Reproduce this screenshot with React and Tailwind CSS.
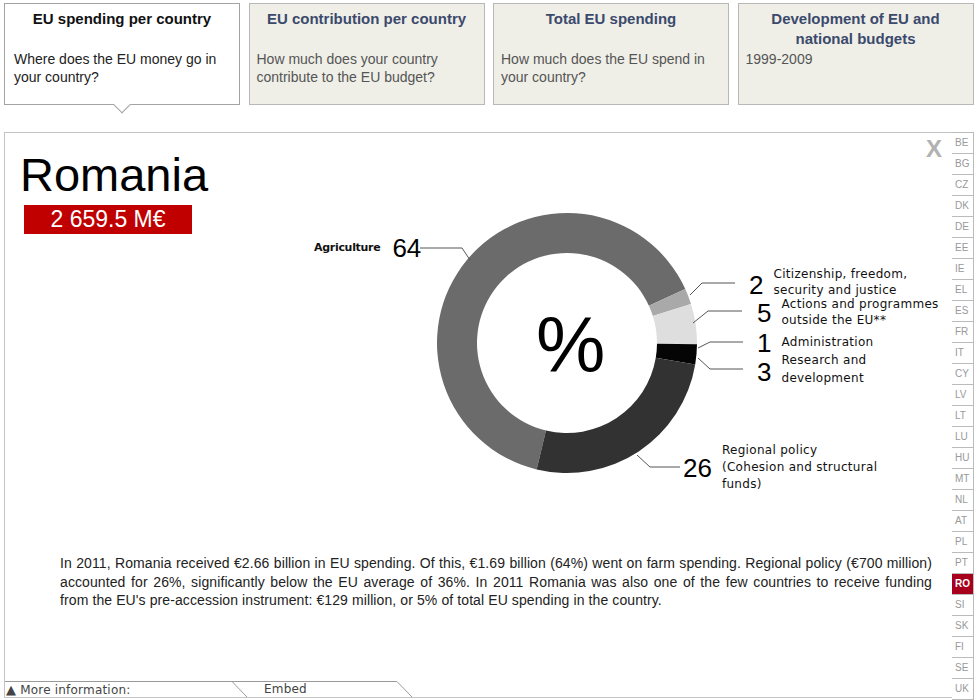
import React from 'react';

const tabs = [
  { title: ['EU spending per country'], desc: 'Where does the EU money go in your country?', active: true },
  { title: ['EU contribution per country'], desc: 'How much does your country contribute to the EU budget?' },
  { title: ['Total EU spending'], desc: 'How much does the EU spend in your country?' },
  { title: ['Development of EU and', 'national budgets'], desc: '1999-2009' },
];

const countries = ['BE', 'BG', 'CZ', 'DK', 'DE', 'EE', 'IE', 'EL', 'ES', 'FR', 'IT', 'CY', 'LV', 'LT', 'LU', 'HU', 'MT', 'NL', 'AT', 'PL', 'PT', 'RO', 'SI', 'SK', 'FI', 'SE', 'UK'];

// donut geometry, in page coordinates
const cx = 567;
const cy = 343;
const R = 130;
const r = 90;

const segments = [
  { from: 193.5, to: 425.5, color: '#6b6b6b' },
  { from: 65.5, to: 72.5, color: '#a9a9a9' },
  { from: 72.5, to: 90.5, color: '#dedede' },
  { from: 90.5, to: 99.5, color: '#050505' },
  { from: 99.5, to: 193.5, color: '#323232' },
];

const pt = (rad, a) => {
  const t = (a * Math.PI) / 180;
  return [cx + rad * Math.sin(t), cy - rad * Math.cos(t)];
};

const arc = (a0, a1) => {
  const large = a1 - a0 > 180 ? 1 : 0;
  const [x0, y0] = pt(R, a0);
  const [x1, y1] = pt(R, a1);
  const [x2, y2] = pt(r, a1);
  const [x3, y3] = pt(r, a0);
  return `M${x0} ${y0} A${R} ${R} 0 ${large} 1 ${x1} ${y1} L${x2} ${y2} A${r} ${r} 0 ${large} 0 ${x3} ${y3} Z`;
};

const leaders = [
  '420,248 462,248 470,260',
  '690,295 702,283 735,283',
  '693,323 708,311 742,311',
  '698,348 710,342 743,342',
  '698,358 710,369 743,369',
  '637,455 650,467 680,467',
];

// chart labels: number + text, placed on the chart canvas (page coords - panel origin 5,133)
const labels = [
  { x: 749, y: 268, numMt: 3.5, textMt: 0, gap: 4, num: '2', lines: ['Citizenship, freedom,', 'security and justice'] },
  { x: 757, y: 298, numMt: 1.5, textMt: 0, gap: 4, num: '5', lines: ['Actions and programmes', 'outside the EU**'] },
  { x: 757, y: 329.5, numMt: 0, textMt: 6.5, gap: 0, num: '1', lines: ['Administration'] },
  { x: 757, y: 354, numMt: 4.5, textMt: 0, gap: 6, num: '3', lines: ['Research and', 'development'] },
  { x: 683, y: 444, numMt: 10.5, textMt: 0, gap: 5, num: '26', lines: ['Regional policy', '(Cohesion and structural', 'funds)'] },
];

const ChartLabel = ({ l }) => (
  <div className="absolute flex items-start gap-[10px]" style={{ left: l.x - 5, top: l.y - 133 }}>
    <div className="text-[26px] leading-none text-black" style={{ marginTop: l.numMt }}>
      {l.num}
    </div>
    <div
      className="flex flex-col text-[12px] leading-[12px] tracking-[0.3px] text-[#111] whitespace-nowrap font-['DejaVu_Sans',Verdana,sans-serif]"
      style={{ marginTop: l.textMt, gap: l.gap }}
    >
      {l.lines.map((t) => (
        <div key={t}>{t}</div>
      ))}
    </div>
  </div>
);

const Tab = ({ tab }) => (
  <div
    className={`relative w-[236px] h-[102px] border pt-[5px] ${
      tab.active ? 'bg-white border-[#a3a3a3] px-[9px]' : 'bg-[#efefe8] border-[#b8b8b8] px-[7px]'
    }`}
  >
    <div
      className={`min-h-[41px] text-center text-[15px] font-bold leading-[20px] ${
        tab.active ? 'text-[#111]' : 'text-[#3b4a6c]'
      }`}
    >
      {tab.title.map((t) => (
        <div key={t}>{t}</div>
      ))}
    </div>
    <div className={`text-[14px] leading-[18px] ${tab.active ? 'text-[#222]' : 'text-[#555]'}`}>{tab.desc}</div>
    {tab.active && (
      <div className="absolute left-1/2 -bottom-[7px] -ml-[6px] w-[12px] h-[12px] rotate-45 bg-white border-r border-b border-[#a3a3a3]" />
    )}
  </div>
);

export default function App() {
  return (
    <div className="w-[974px] h-[700px] overflow-hidden bg-white font-['Liberation_Sans',Arial,sans-serif]">
      <div className="flex gap-[8.5px] pt-[3px] pl-[4px]">
        {tabs.map((t, i) => (
          <Tab key={i} tab={t} />
        ))}
      </div>

      <div className="flex mt-[27px] ml-[4px]">
        <div className="relative flex flex-col w-[948px] h-[566px] border-l border-t border-b border-[#c4c4c4]">
          <div className="relative h-[421px]">
            <div className="pl-[15px] pt-[18px]">
              <div className="text-[47px] leading-none text-black">Romania</div>
              <div className="mt-[7px] ml-[4px] w-[168px] h-[29px] bg-[#c00000] text-white text-[23px] leading-[29px] text-center">
                2 659.5 M€
              </div>
            </div>

            <div className="absolute right-[10px] top-[4px] text-[24px] font-bold leading-none text-[#b2b2b2]">X</div>

            <svg className="absolute left-0 top-0" width="947" height="421" viewBox="5 133 947 421">
              {segments.map((s, i) => (
                <path key={i} d={arc(s.from, s.to)} fill={s.color} />
              ))}
              {leaders.map((p, i) => (
                <polyline key={i} points={p} fill="none" stroke="#555" strokeWidth="1" />
              ))}
            </svg>

            <div className="absolute left-[531px] top-[173px] text-[78px] leading-none text-black">%</div>

            <div className="absolute left-[309px] top-[101.5px] flex items-start gap-[12px]">
              <div className="mt-[7.5px] text-[11px] font-bold tracking-[-0.3px] leading-[12px] text-[#111] font-['DejaVu_Sans',Verdana,sans-serif]">
                Agriculture
              </div>
              <div className="text-[26px] leading-none text-black">64</div>
            </div>

            {labels.map((l) => (
              <ChartLabel key={l.num} l={l} />
            ))}
          </div>

          <p className="pl-[55px] pr-[20px] text-[14px] leading-[18.5px] tracking-[0.1px] text-[#222] text-justify">
            In 2011, Romania received €2.66 billion in EU spending. Of this, €1.69 billion (64%) went on farm
            spending. Regional policy (€700 million) accounted for 26%, significantly below the EU average of 36%.
            In 2011 Romania was also one of the few countries to receive funding{' '}
            {'from\u00A0the'} EU's pre-accession instrument: €129 million, or 5% of total EU spending in the country.
          </p>

          <div className="relative mt-auto h-[16px] flex items-center text-[12px] tracking-[0.2px] text-[#444] font-['DejaVu_Sans',Verdana,sans-serif]">
            <svg className="absolute left-0 top-0" width="420" height="16">
              <polyline points="0,0.5 392,0.5 407,16" fill="none" stroke="#9a9a9a" strokeWidth="1" />
              <line x1="227" y1="0.5" x2="242" y2="16" stroke="#9a9a9a" strokeWidth="1" />
            </svg>
            <div className="w-[259px] pl-[1px] leading-none">
              <span className="text-[13px]">▲</span> More information:
            </div>
            <div className="leading-none">Embed</div>
          </div>
        </div>

        <div className="flex flex-col w-[22px] border-t border-[#bbb]">
          {countries.map((c) => (
            <div
              key={c}
              className={`h-[21px] shrink-0 border-r border-b border-[#bbb] pl-[3px] text-[10px] leading-[20px] ${
                c === 'RO' ? 'bg-[#a8001c] text-white font-bold' : 'bg-white text-[#999]'
              }`}
            >
              {c}
            </div>
          ))}
        </div>
      </div>
    </div>
  );
}
